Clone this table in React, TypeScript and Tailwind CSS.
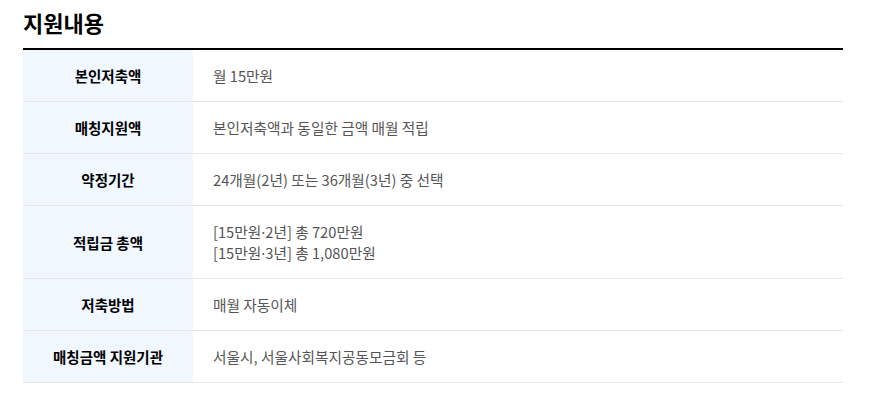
export default function App() {
  const rows: { label: string; value: string[] }[] = [
    { label: "본인저축액", value: ["월 15만원"] },
    { label: "매칭지원액", value: ["본인저축액과 동일한 금액 매월 적립"] },
    { label: "약정기간", value: ["24개월(2년) 또는 36개월(3년) 중 선택"] },
    { label: "적립금 총액", value: ["[15만원·2년] 총 720만원", "[15만원·3년] 총 1,080만원"] },
    { label: "저축방법", value: ["매월 자동이체"] },
    { label: "매칭금액 지원기관", value: ["서울시, 서울사회복지공동모금회 등"] },
  ];

  // the CJK middle dot is full width; the reference uses a narrow one
  const renderLine = (line: string) =>
    line.split("·").map((part, i) => (
      <span key={i}>
        {i > 0 && <span className="font-['Noto_Sans'] leading-none">·</span>}
        {part}
      </span>
    ));

  return (
    <main
      className="w-[883px] h-[413px] bg-white px-[23px] pt-[6px]"
      style={{ fontFamily: '"Noto Sans CJK KR", "Noto Sans", sans-serif' }}
    >
      <h2 className="text-[22px] font-bold leading-[32px] text-black">지원내용</h2>
      <table className="w-[820px] mt-[10px] border-t-2 border-black border-collapse">
        <tbody>
          {rows.map((row) => (
            <tr key={row.label} className="border-b border-[#e6e6e6]">
              <th className="w-[170px] bg-[#f0f7fe] text-center text-[14.5px] font-bold text-black leading-[21px] py-[15px]">
                {row.label}
              </th>
              <td className="pl-[20px] text-[14.7px] text-[#555] leading-[21px] py-[15px]">
                {row.value.map((line) => (
                  <div key={line} className="h-[21px]">{renderLine(line)}</div>
                ))}
              </td>
            </tr>
          ))}
        </tbody>
      </table>
    </main>
  );
}
